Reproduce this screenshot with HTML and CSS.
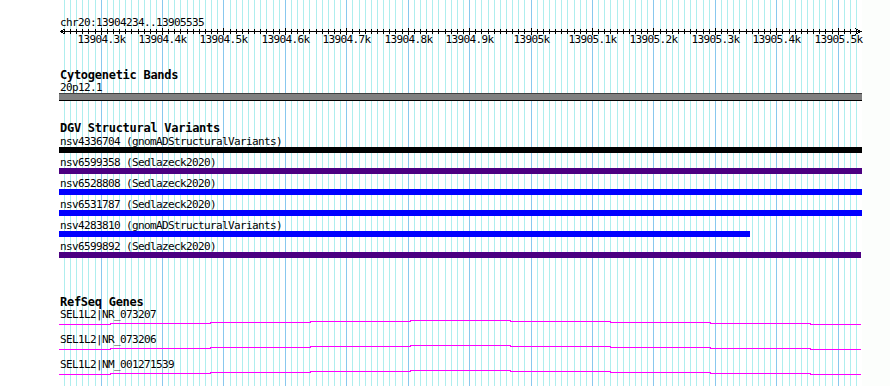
FILE: index.html
```html
<!DOCTYPE html>
<html>
<head>
<meta charset="utf-8">
<title>Genome view</title>
<link rel="stylesheet" href="styles.css">
</head>
<body>
<div class="gutter"></div>
<div class="view">
  <svg class="grid" id="grid" width="803" height="386" shape-rendering="crispEdges"></svg>
  <div class="content">
    <div class="txt locus">chr20:13904234..13905535</div>
    <svg class="axis" width="803" height="7" shape-rendering="crispEdges">
      <g id="ticks"></g>
      <rect x="1" y="3" width="802" height="1"></rect>
      <path class="arrow" d="M6.5 0.5 L1.5 3.5 L6.5 6.5"></path>
      <path class="arrow" d="M796.5 0.5 L801.5 3.5 L796.5 6.5"></path>
    </svg>
    <div class="tick-labels">
      <span class="tick-label" style="left:42px">13904.3k</span>
      <span class="tick-label" style="left:103px">13904.4k</span>
      <span class="tick-label" style="left:164px">13904.5k</span>
      <span class="tick-label" style="left:226px">13904.6k</span>
      <span class="tick-label" style="left:287px">13904.7k</span>
      <span class="tick-label" style="left:349px">13904.8k</span>
      <span class="tick-label" style="left:410px">13904.9k</span>
      <span class="tick-label" style="left:472px">13905k</span>
      <span class="tick-label" style="left:533px">13905.1k</span>
      <span class="tick-label" style="left:594px">13905.2k</span>
      <span class="tick-label" style="left:656px">13905.3k</span>
      <span class="tick-label" style="left:717px">13905.4k</span>
      <span class="tick-label" style="left:779px">13905.5k</span>
    </div>

    <section class="track cyto">
      <div class="track-title">Cytogenetic Bands</div>
      <div class="txt band-label">20p12.1</div>
      <div class="band"></div>
    </section>

    <section class="track dgv">
      <div class="track-title">DGV Structural Variants</div>
      <div class="sv-row">
        <div class="txt">nsv4336704 (gnomADStructuralVariants)</div>
        <div class="bar bar-black"></div>
      </div>
      <div class="sv-row">
        <div class="txt">nsv6599358 (Sedlazeck2020)</div>
        <div class="bar bar-purple"></div>
      </div>
      <div class="sv-row">
        <div class="txt">nsv6528808 (Sedlazeck2020)</div>
        <div class="bar bar-blue"></div>
      </div>
      <div class="sv-row">
        <div class="txt">nsv6531787 (Sedlazeck2020)</div>
        <div class="bar bar-blue"></div>
      </div>
      <div class="sv-row">
        <div class="txt">nsv4283810 (gnomADStructuralVariants)</div>
        <div class="bar bar-blue" style="width:691px"></div>
      </div>
      <div class="sv-row">
        <div class="txt">nsv6599892 (Sedlazeck2020)</div>
        <div class="bar bar-purple" style="width:802px"></div>
      </div>
    </section>

    <section class="track genes">
      <div class="track-title">RefSeq Genes</div>
      <div class="gene-row">
        <div class="txt">SEL1L2|NR_073207</div>
        <svg class="intron" width="803" height="5" shape-rendering="crispEdges"><use href="#hat"></use></svg>
      </div>
      <div class="gene-row">
        <div class="txt">SEL1L2|NR_073206</div>
        <svg class="intron" width="803" height="5" shape-rendering="crispEdges"><use href="#hat"></use></svg>
      </div>
      <div class="gene-row">
        <div class="txt">SEL1L2|NM_001271539</div>
        <svg class="intron" width="803" height="5" shape-rendering="crispEdges"><use href="#hat"></use></svg>
      </div>
    </section>
  </div>
</div>
<div class="rest"></div>

<svg class="defs" width="0" height="0">
  <defs>
    <g id="hat">
      <rect x="0" y="4" width="52" height="1"></rect>
      <rect x="51" y="3" width="101" height="1"></rect>
      <rect x="151" y="2" width="101" height="1"></rect>
      <rect x="251" y="1" width="101" height="1"></rect>
      <rect x="351" y="0" width="101" height="1"></rect>
      <rect x="451" y="1" width="101" height="1"></rect>
      <rect x="551" y="2" width="101" height="1"></rect>
      <rect x="651" y="3" width="101" height="1"></rect>
      <rect x="751" y="4" width="51" height="1"></rect>
    </g>
  </defs>
</svg>
<script src="script.js"></script>
</body>
</html>
```

FILE: styles.css
```css
html, body {
  margin: 0;
  height: 386px;
  overflow: hidden;
}

body {
  display: flex;
  background: #ffffff;
  color: #000000;
  font-family: "DejaVu Sans Mono", "Liberation Mono", monospace;
}

.gutter {
  width: 59px;
  flex: none;
}

.view {
  width: 803px;
  height: 386px;
  flex: none;
  position: relative;
}

.rest {
  flex: 1;
  background: #fcfefc;
}

.defs {
  position: absolute;
  width: 0;
  height: 0;
}

.grid {
  position: absolute;
  left: 0;
  top: 0;
  display: block;
}

.gmin { fill: #aeeeee; }
.gmaj { fill: #88c8ee; }

.content {
  position: relative;
  padding-top: 17px;
}

.txt {
  font-size: 11px;
  line-height: 11px;
  letter-spacing: -0.62px;
  padding-left: 1px;
  white-space: nowrap;
}

.axis {
  display: block;
  fill: #000;
}

.axis .arrow {
  fill: none;
  stroke: #000;
  stroke-width: 1;
}

.tick-labels {
  position: relative;
  height: 9px;
}

.tick-label {
  position: absolute;
  top: 0;
  width: 48px;
  margin-left: -23.5px;
  text-align: center;
  font-size: 11px;
  line-height: 9px;
  letter-spacing: -0.62px;
  white-space: nowrap;
}

.track-title {
  font-size: 12px;
  line-height: 12px;
  font-weight: bold;
  letter-spacing: -0.27px;
  padding-left: 1px;
  white-space: nowrap;
}

.cyto { margin-top: 25px; }
.band-label { margin-top: 1px; }

.band {
  height: 6px;
  background: #808080;
  border-top: 1px solid #404040;
  border-bottom: 1px solid #000000;
}

.dgv { margin-top: 21px; }

.sv-row { margin-top: 4px; }
.sv-row:first-of-type { margin-top: 2px; }

.dgv .track-title + .sv-row { margin-top: 2px; }

.bar {
  height: 6px;
  width: 803px;
}

.bar-black { background: #000000; }
.bar-purple { background: #4b0082; }
.bar-blue { background: #0000ff; }

.genes { margin-top: 38px; }

.gene-row { margin-top: 9px; }
.genes .track-title + .gene-row { margin-top: 1px; }

.intron {
  display: block;
  fill: #ff00ff;
}
```

FILE: script.js
```js
(function () {
  var NS = "http://www.w3.org/2000/svg";
  var grid = document.getElementById("grid");
  var ticks = document.getElementById("ticks");
  var start = 13904233;
  var scale = 0.6142;
  var origin = 1;
  for (var bp = 13904240; bp <= 13905530; bp += 10) {
    var x = Math.floor(origin + (bp - start) * scale);
    var major = bp % 100 === 0;
    var g = document.createElementNS(NS, "rect");
    g.setAttribute("x", x);
    g.setAttribute("y", 0);
    g.setAttribute("width", 1);
    g.setAttribute("height", 386);
    g.setAttribute("class", major ? "gmaj" : "gmin");
    grid.appendChild(g);
    var t = document.createElementNS(NS, "rect");
    t.setAttribute("x", x);
    t.setAttribute("y", major ? 0 : 1);
    t.setAttribute("width", 1);
    t.setAttribute("height", major ? 7 : 5);
    ticks.appendChild(t);
  }
})();
```
